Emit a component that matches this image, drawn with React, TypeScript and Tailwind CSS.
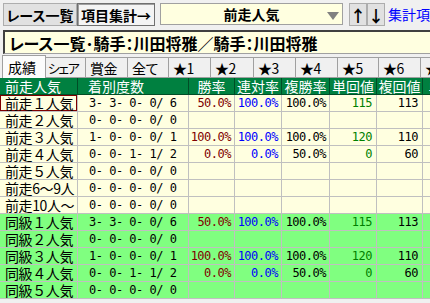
import React from 'react'

const JP = "font-['Noto_Sans_CJK_JP','Noto_Sans',sans-serif]"
const MONO = "font-['DejaVu_Sans_Mono','Liberation_Mono',monospace] text-[12px] tracking-[-0.5px] whitespace-pre"
const PALT = "[font-feature-settings:'palt']"

type Row = {
  label: string
  count: string
  win?: string
  ren?: string
  fuku?: string
  tan?: string
  fukuKai?: string
  green?: boolean
  selected?: boolean
}

const base = [
  { count: '3- 3- 0- 0/ 6', win: '50.0%', ren: '100.0%', fuku: '100.0%', tan: '115', fukuKai: '113' },
  { count: '0- 0- 0- 0/ 0' },
  { count: '1- 0- 0- 0/ 1', win: '100.0%', ren: '100.0%', fuku: '100.0%', tan: '120', fukuKai: '110' },
  { count: '0- 0- 1- 1/ 2', win: '0.0%', ren: '0.0%', fuku: '50.0%', tan: '0', fukuKai: '60' },
  { count: '0- 0- 0- 0/ 0' },
]

const rows: Row[] = [
  { label: '前走１人気', ...base[0], selected: true },
  { label: '前走２人気', ...base[1] },
  { label: '前走３人気', ...base[2] },
  { label: '前走４人気', ...base[3] },
  { label: '前走５人気', ...base[4] },
  { label: '前走6〜9人', count: '0- 0- 0- 0/ 0' },
  { label: '前走10人〜', count: '0- 0- 0- 0/ 0' },
  { label: '同級１人気', ...base[0], green: true },
  { label: '同級２人気', ...base[1], green: true },
  { label: '同級３人気', ...base[2], green: true },
  { label: '同級４人気', ...base[3], green: true },
  { label: '同級５人気', ...base[4], green: true },
]

const tabs = ['シェア', '賞金', '全て', '★1', '★2', '★3', '★4', '★5', '★6', '★7']
const tabW = ['w-[40px]', 'w-[42px]', 'w-[41px]', 'w-[42px]', 'w-[43px]', 'w-[42px]', 'w-[42px]', 'w-[41px]', 'w-[42px]', 'w-[42px]']

const COLS = 'grid grid-cols-[78px_111px_46px_47px_48px_47px_46px_40px]'

function DataRow({ r }: { r: Row }) {
  const bg = r.green ? 'bg-[#80ff80]' : 'bg-[#ffffe0]'
  const cell = `h-[17px] border-r border-b border-[#c0c0c0] flex items-center overflow-hidden whitespace-nowrap leading-[16px] ${bg}`
  return (
    <div className={COLS}>
      <div className={`${cell} pl-[5px] text-[14px] tracking-[-0.4px] text-black ${r.selected ? 'shadow-[inset_0_0_0_1px_#800000]' : ''}`}>
        {r.label}
      </div>
      <div className={`${cell} pl-[11px] ${MONO}`}>{r.count}</div>
      <div className={`${cell} justify-end pr-[3px] ${MONO} text-[#800000]`}>{r.win}</div>
      <div className={`${cell} justify-end pr-[3px] ${MONO} text-[#0000ff]`}>{r.ren}</div>
      <div className={`${cell} justify-end pr-[3px] ${MONO} text-black`}>{r.fuku}</div>
      <div className={`${cell} justify-end pr-[4px] ${MONO} text-[#008000]`}>{r.tan}</div>
      <div className={`${cell} justify-end pr-[4px] ${MONO} text-black`}>{r.fukuKai}</div>
      <div className={cell}></div>
    </div>
  )
}

export default function App() {
  return (
    <div className={`w-[430px] h-[303px] overflow-hidden bg-[#f0f0f0] ${JP}`}>
      {/* Top toolbar */}
      <div className={`h-[30px] flex items-start pt-[3px] pl-[3px] whitespace-nowrap ${PALT}`}>
        <button className="shrink-0 w-[74px] h-[23px] bg-[#e1e1e1] border border-[#adadad] text-[14px] font-bold text-black leading-none flex items-center justify-center">
          レース一覧
        </button>
        <button className="shrink-0 w-[78px] h-[23px] bg-[#f4f4f4] border border-[#707070] shadow-[inset_1px_1px_0_#a0a0a0] text-[14px] font-bold text-black leading-none flex items-center justify-center">
          項目集計→
        </button>
        <div className="shrink-0 ml-[5px] w-[183px] h-[22px] bg-[#ffffe0] border border-[#a0a0a0] relative flex items-center justify-center">
          <span className="text-[14px] font-bold text-black leading-none">前走人気</span>
          <span className="absolute right-[3px] top-[8px] w-0 h-0 border-l-[6px] border-r-[6px] border-t-[8px] border-l-transparent border-r-transparent border-t-[#808080]"></span>
        </div>
        <div className="shrink-0 ml-[6px] flex">
          <button className="w-[18px] h-[23px] bg-[#e1e1e1] border border-[#adadad] text-[16px] font-bold leading-none flex items-center justify-center">↑</button>
          <button className="w-[18px] h-[23px] bg-[#e1e1e1] border border-[#adadad] text-[16px] font-bold leading-none flex items-center justify-center">↓</button>
        </div>
        <span className="shrink-0 ml-[3px] mt-[4px] text-[14px] text-[#0000ff] leading-none">集計項目</span>
      </div>

      {/* Title bar */}
      <div className={`ml-[3px] h-[24px] bg-[#ffffe0] border-t-2 border-l-2 border-[#404040] border-b border-b-[#a0a0a0] flex items-center pl-[4px] whitespace-nowrap overflow-hidden ${PALT}`}>
        <span className="text-[16px] font-bold text-black leading-none">レース一覧･騎手：川田将雅／騎手：川田将雅</span>
      </div>

      {/* Tabs */}
      <div className={`mt-[1px] h-[23px] flex items-end whitespace-nowrap overflow-hidden text-[14px] leading-[16px] text-black ${PALT}`}>
        <div className="shrink-0 ml-[2px] w-[44px] h-[23px] bg-[#fcfcfc] border border-b-0 border-[#a0a0a0] pl-[5px] flex items-center">成績</div>
        {tabs.map((t, i) => (
          <div
            key={t}
            className={`${tabW[i]} shrink-0 h-[21px] bg-[#f0f0f0] border-r border-t border-[#a0a0a0] border-b border-b-[#a0a0a0] flex items-center overflow-hidden ${
              i === 0 ? 'pl-[2px] text-[13px] tracking-[-1.5px]' : 'pl-[4px] tracking-[-0.5px]'
            }`}
          >
            {t}
          </div>
        ))}
      </div>

      {/* Table */}
      <div>
        <div className={COLS}>
          {['前走人気', '着別度数', '勝率', '連対率', '複勝率', '単回値', '複回値', '単回'].map((h, i) => (
            <div
              key={h}
              className={`h-[17px] bg-[#008040] border-r border-b border-[#004d26] text-white text-[14px] leading-[16px] flex items-center overflow-hidden whitespace-nowrap ${
                i === 0 ? 'pl-[5px]' : i === 1 ? 'pl-[10px]' : 'justify-center'
              }`}
            >
              {h}
            </div>
          ))}
        </div>
        {rows.map((r) => (
          <DataRow key={r.label} r={r} />
        ))}
      </div>
    </div>
  )
}
